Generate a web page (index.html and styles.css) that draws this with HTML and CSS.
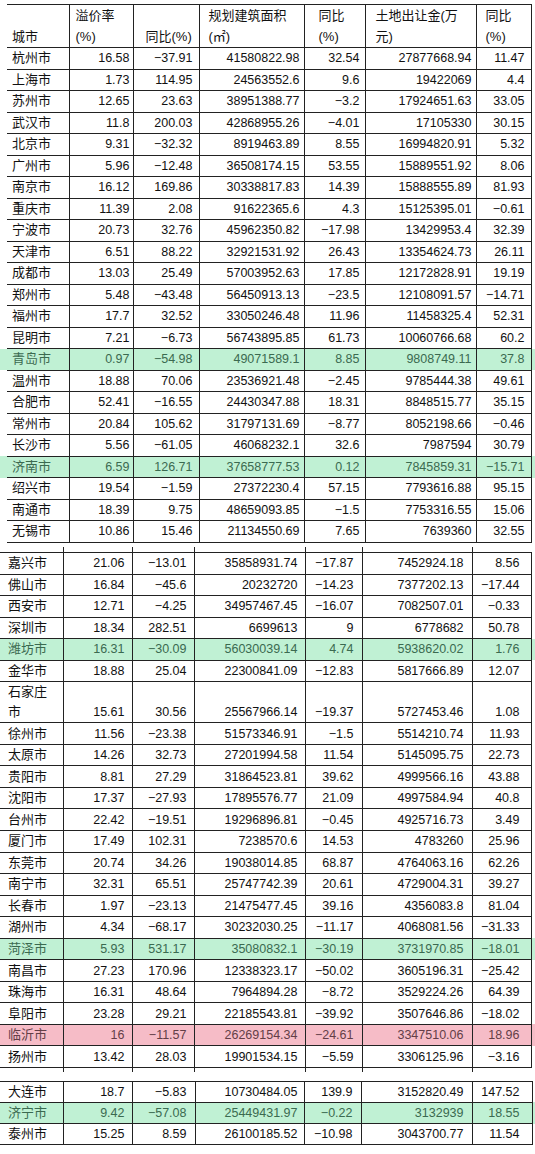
FILE: index.html
```html
<!DOCTYPE html>
<html lang="zh">
<head>
<meta charset="utf-8">
<title>城市土地出让</title>
<link rel="stylesheet" href="styles.css">
</head>
<body>
<table class="tbl t1">
<colgroup><col class="c1"><col class="c2"><col class="c3"><col class="c4"><col class="c5"><col class="c6"><col class="c7"></colgroup>
<tr class="head">
<td>城市</td><td>溢价率<br>(%)</td><td>同比(%)</td><td>规划建筑面积<br>(㎡)</td><td>同比<br>(%)</td><td>土地出让金(万<br>元)</td><td>同比<br>(%)</td>
</tr>
<tr><td>杭州市</td><td>16.58</td><td>−37.91</td><td>41580822.98</td><td>32.54</td><td>27877668.94</td><td>11.47</td></tr>
<tr><td>上海市</td><td>1.73</td><td>114.95</td><td>24563552.6</td><td>9.6</td><td>19422069</td><td>4.4</td></tr>
<tr><td>苏州市</td><td>12.65</td><td>23.63</td><td>38951388.77</td><td>−3.2</td><td>17924651.63</td><td>33.05</td></tr>
<tr><td>武汉市</td><td>11.8</td><td>200.03</td><td>42868955.26</td><td>−4.01</td><td>17105330</td><td>30.15</td></tr>
<tr><td>北京市</td><td>9.31</td><td>−32.32</td><td>8919463.89</td><td>8.55</td><td>16994820.91</td><td>5.32</td></tr>
<tr><td>广州市</td><td>5.96</td><td>−12.48</td><td>36508174.15</td><td>53.55</td><td>15889551.92</td><td>8.06</td></tr>
<tr><td>南京市</td><td>16.12</td><td>169.86</td><td>30338817.83</td><td>14.39</td><td>15888555.89</td><td>81.93</td></tr>
<tr><td>重庆市</td><td>11.39</td><td>2.08</td><td>91622365.6</td><td>4.3</td><td>15125395.01</td><td>−0.61</td></tr>
<tr><td>宁波市</td><td>20.73</td><td>32.76</td><td>45962350.82</td><td>−17.98</td><td>13429953.4</td><td>32.39</td></tr>
<tr><td>天津市</td><td>6.51</td><td>88.22</td><td>32921531.92</td><td>26.43</td><td>13354624.73</td><td>26.11</td></tr>
<tr><td>成都市</td><td>13.03</td><td>25.49</td><td>57003952.63</td><td>17.85</td><td>12172828.91</td><td>19.19</td></tr>
<tr><td>郑州市</td><td>5.48</td><td>−43.48</td><td>56450913.13</td><td>−23.5</td><td>12108091.57</td><td>−14.71</td></tr>
<tr><td>福州市</td><td>17.7</td><td>32.52</td><td>33050246.48</td><td>11.96</td><td>11458325.4</td><td>52.31</td></tr>
<tr><td>昆明市</td><td>7.21</td><td>−6.73</td><td>56743895.85</td><td>61.73</td><td>10060766.68</td><td>60.2</td></tr>
<tr class="green"><td>青岛市</td><td>0.97</td><td>−54.98</td><td>49071589.1</td><td>8.85</td><td>9808749.11</td><td>37.8</td></tr>
<tr><td>温州市</td><td>18.88</td><td>70.06</td><td>23536921.48</td><td>−2.45</td><td>9785444.38</td><td>49.61</td></tr>
<tr><td>合肥市</td><td>52.41</td><td>−16.55</td><td>24430347.88</td><td>18.31</td><td>8848515.77</td><td>35.15</td></tr>
<tr><td>常州市</td><td>20.84</td><td>105.62</td><td>31797131.69</td><td>−8.77</td><td>8052198.66</td><td>−0.46</td></tr>
<tr><td>长沙市</td><td>5.56</td><td>−61.05</td><td>46068232.1</td><td>32.6</td><td>7987594</td><td>30.79</td></tr>
<tr class="green"><td>济南市</td><td>6.59</td><td>126.71</td><td>37658777.53</td><td>0.12</td><td>7845859.31</td><td>−15.71</td></tr>
<tr><td>绍兴市</td><td>19.54</td><td>−1.59</td><td>27372230.4</td><td>57.15</td><td>7793616.88</td><td>95.15</td></tr>
<tr><td>南通市</td><td>18.39</td><td>9.75</td><td>48659093.85</td><td>−1.5</td><td>7753316.55</td><td>15.06</td></tr>
<tr><td>无锡市</td><td>10.86</td><td>15.46</td><td>21134550.69</td><td>7.65</td><td>7639360</td><td>32.55</td></tr>
</table>

<table class="tbl t2">
<colgroup><col class="c1"><col class="c2"><col class="c3"><col class="c4"><col class="c5"><col class="c6"><col class="c7"></colgroup>
<tr class="tick top"><td></td><td></td><td></td><td></td><td></td><td></td><td></td></tr>
<tr><td>嘉兴市</td><td>21.06</td><td>−13.01</td><td>35858931.74</td><td>−17.87</td><td>7452924.18</td><td>8.56</td></tr>
<tr><td>佛山市</td><td>16.84</td><td>−45.6</td><td>20232720</td><td>−14.23</td><td>7377202.13</td><td>−17.44</td></tr>
<tr><td>西安市</td><td>12.71</td><td>−4.25</td><td>34957467.45</td><td>−16.07</td><td>7082507.01</td><td>−0.33</td></tr>
<tr><td>深圳市</td><td>18.34</td><td>282.51</td><td>6699613</td><td>9</td><td>6778682</td><td>50.78</td></tr>
<tr class="green"><td>潍坊市</td><td>16.31</td><td>−30.09</td><td>56030039.14</td><td>4.74</td><td>5938620.02</td><td>1.76</td></tr>
<tr><td>金华市</td><td>18.88</td><td>25.04</td><td>22300841.09</td><td>−12.83</td><td>5817666.89</td><td>12.07</td></tr>
<tr class="double"><td>石家庄<br>市</td><td>15.61</td><td>30.56</td><td>25567966.14</td><td>−19.37</td><td>5727453.46</td><td>1.08</td></tr>
<tr><td>徐州市</td><td>11.56</td><td>−23.38</td><td>51573346.91</td><td>−1.5</td><td>5514210.74</td><td>11.93</td></tr>
<tr><td>太原市</td><td>14.26</td><td>32.73</td><td>27201994.58</td><td>11.54</td><td>5145095.75</td><td>22.73</td></tr>
<tr><td>贵阳市</td><td>8.81</td><td>27.29</td><td>31864523.81</td><td>39.62</td><td>4999566.16</td><td>43.88</td></tr>
<tr><td>沈阳市</td><td>17.37</td><td>−27.93</td><td>17895576.77</td><td>21.09</td><td>4997584.94</td><td>40.8</td></tr>
<tr><td>台州市</td><td>22.42</td><td>−19.51</td><td>19296896.81</td><td>−0.45</td><td>4925716.73</td><td>3.49</td></tr>
<tr><td>厦门市</td><td>17.49</td><td>102.31</td><td>7238570.6</td><td>14.53</td><td>4783260</td><td>25.96</td></tr>
<tr><td>东莞市</td><td>20.74</td><td>34.26</td><td>19038014.85</td><td>68.87</td><td>4764063.16</td><td>62.26</td></tr>
<tr><td>南宁市</td><td>32.31</td><td>65.51</td><td>25747742.39</td><td>20.61</td><td>4729004.31</td><td>39.27</td></tr>
<tr><td>长春市</td><td>1.97</td><td>−23.13</td><td>21475477.45</td><td>39.16</td><td>4356083.8</td><td>81.04</td></tr>
<tr><td>湖州市</td><td>4.34</td><td>−68.17</td><td>30232030.25</td><td>−11.17</td><td>4068081.56</td><td>−31.33</td></tr>
<tr class="green"><td>菏泽市</td><td>5.93</td><td>531.17</td><td>35080832.1</td><td>−30.19</td><td>3731970.85</td><td>−18.01</td></tr>
<tr><td>南昌市</td><td>27.23</td><td>170.96</td><td>12338323.17</td><td>−50.02</td><td>3605196.31</td><td>−25.42</td></tr>
<tr><td>珠海市</td><td>16.31</td><td>48.64</td><td>7964894.28</td><td>−8.72</td><td>3529224.26</td><td>64.39</td></tr>
<tr><td>阜阳市</td><td>23.28</td><td>29.21</td><td>22185543.81</td><td>−39.92</td><td>3507646.86</td><td>−18.02</td></tr>
<tr class="pink"><td>临沂市</td><td>16</td><td>−11.57</td><td>26269154.34</td><td>−24.61</td><td>3347510.06</td><td>18.96</td></tr>
<tr><td>扬州市</td><td>13.42</td><td>28.03</td><td>19901534.15</td><td>−5.59</td><td>3306125.96</td><td>−3.16</td></tr>
<tr class="tick bottom"><td></td><td></td><td></td><td></td><td></td><td></td><td></td></tr>
</table>

<table class="tbl t3">
<colgroup><col class="c1"><col class="c2"><col class="c3"><col class="c4"><col class="c5"><col class="c6"><col class="c7"></colgroup>
<tr><td>大连市</td><td>18.7</td><td>−5.83</td><td>10730484.05</td><td>139.9</td><td>3152820.49</td><td>147.52</td></tr>
<tr class="green"><td>济宁市</td><td>9.42</td><td>−57.08</td><td>25449431.97</td><td>−0.22</td><td>3132939</td><td>18.55</td></tr>
<tr><td>泰州市</td><td>15.25</td><td>8.59</td><td>26100185.52</td><td>−10.98</td><td>3043700.77</td><td>11.54</td></tr>
</table>
</body>
</html>
```
FILE: styles.css
```css
html, body {
  margin: 0;
  padding: 0;
  background: #ffffff;
}
body {
  font-family: "Liberation Sans", "Noto Sans CJK SC", sans-serif;
  font-size: 12.5px;
  color: #111111;
  width: 535px;
  overflow: hidden;
}
.tbl {
  border-collapse: collapse;
  table-layout: fixed;
}
.tbl td {
  border: 1px solid #222222;
  padding: 0 6px 0 4px;
  line-height: 18px;
  white-space: nowrap;
  text-align: right;
  vertical-align: middle;
}
.tbl td:first-child {
  border-left: none;
  text-align: left;
  font-size: 13px;
}

/* table 1 */
.t1 {
  margin: 4px 0 0 7px;
  width: 524px;
}
.t1 .c1 { width: 62px; }
.t1 .c2 { width: 64px; }
.t1 .c3 { width: 66px; }
.t1 .c4 { width: 105px; }
.t1 .c5 { width: 61px; }
.t1 .c6 { width: 111px; }
.t1 .c7 { width: 55px; }
.t1 tr { height: 21.5px; }
.t1 td:nth-child(1) { padding-left: 5px; }
.t1 td:nth-child(2) { padding-right: 3px; }
.t1 td:nth-child(3) { padding-right: 6px; }
.t1 td:nth-child(4) { padding-right: 4px; }
.t1 td:nth-child(5) { padding-right: 5px; }
.t1 td:nth-child(6) { padding-right: 4px; }
.t1 td:nth-child(7) { padding-right: 6px; }

.t1 .head { height: 42px; }
.t1 .head td {
  text-align: left;
  vertical-align: bottom;
  line-height: 21px;
  padding-right: 0;
  font-size: 13px;
}
.t1 .head td:nth-child(1) { padding-left: 5px; }
.t1 .head td:nth-child(2) { padding-left: 6px; }
.t1 .head td:nth-child(3) { padding-left: 12px; }
.t1 .head td:nth-child(4) { padding-left: 9px; }
.t1 .head td:nth-child(5) { padding-left: 14px; }
.t1 .head td:nth-child(6) { padding-left: 10px; }
.t1 .head td:nth-child(7) { padding-left: 9px; }

/* table 2 */
.t2 {
  margin: 4px 0 0 0;
  width: 531px;
}
.t2 .c1 { width: 63px; }
.t2 .c2 { width: 69px; }
.t2 .c3 { width: 62px; }
.t2 .c4 { width: 111px; }
.t2 .c5 { width: 57px; }
.t2 .c6 { width: 110px; }
.t2 .c7 { width: 59px; }
.t2 tr { height: 21.55px; }
.t2 td:nth-child(1) { padding-left: 8px; }
.t2 td:nth-child(2) { padding-right: 7px; }
.t2 td:nth-child(3) { padding-right: 7px; }
.t2 td:nth-child(4) { padding-right: 7px; }
.t2 td:nth-child(5) { padding-right: 8px; }
.t2 td:nth-child(6) { padding-right: 8px; }
.t2 td:nth-child(7) { padding-right: 11px; }

.t2 .double { height: 38px; }
.t2 .double td {
  vertical-align: bottom;
  line-height: 20px;
}

.tick td {
  padding: 0;
  line-height: 0;
  font-size: 0;
}
.tick td:last-child {
  border-right: none;
}
.tick.top { height: 6px; }
.tick.top td { border-top: none; }
.tick.bottom { height: 4px; }
.tick.bottom td { border-bottom: none; }

/* table 3 */
.t3 {
  margin: 9px 0 0 0;
  width: 532px;
}
.t3 .c1 { width: 63px; }
.t3 .c2 { width: 69px; }
.t3 .c3 { width: 63px; }
.t3 .c4 { width: 109px; }
.t3 .c5 { width: 57px; }
.t3 .c6 { width: 111px; }
.t3 .c7 { width: 60px; }
.t3 tr { height: 21.3px; }
.t3 td:nth-child(1) { padding-left: 8px; }
.t3 td:nth-child(2) { padding-right: 7px; }
.t3 td:nth-child(3) { padding-right: 8px; }
.t3 td:nth-child(4) { padding-right: 6px; }
.t3 td:nth-child(5) { padding-right: 8px; }
.t3 td:nth-child(6) { padding-right: 8px; }
.t3 td:nth-child(7) { padding-right: 12px; }

/* highlighted rows */
.green td {
  background: #c0f1d4;
  color: #3b6a50;
}
.pink td {
  background: #f6bcc7;
  color: #633e47;
}
.t1 .green td:first-child { box-shadow: -7px 0 0 #c0f1d4; }
.t1 .green td:last-child { box-shadow: 4px 0 0 #c0f1d4; }
.t2 .green td:last-child { box-shadow: 4px 0 0 #c0f1d4; }
.t2 .pink td:last-child { box-shadow: 4px 0 0 #f6bcc7; }
.t3 .green td:last-child { box-shadow: 3px 0 0 #c0f1d4; }
```
